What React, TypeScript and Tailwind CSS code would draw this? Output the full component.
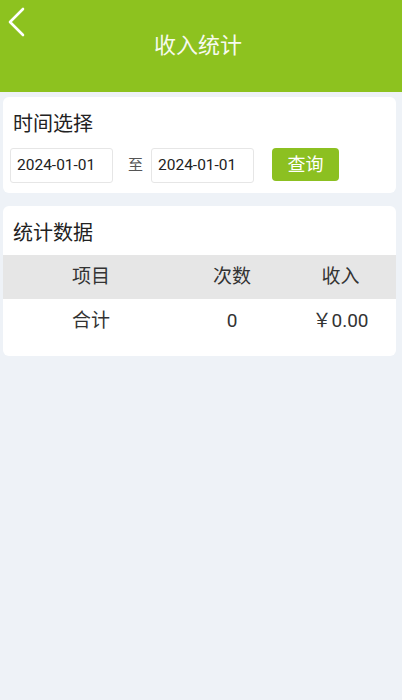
import React from "react";

const font = { fontFamily: "Roboto, 'Noto Sans CJK SC', sans-serif" };

export default function App() {
  return (
    <div className="min-h-[700px] w-[402px] bg-[#eef2f7]" style={font}>
      <div className="relative h-[92px] bg-[#8dc21f] flex items-center justify-center">
        <svg className="absolute left-[6px] top-[7px]" width="20" height="30" viewBox="0 0 20 30">
          <path d="M17 2 L4 15 L17 28" fill="none" stroke="#fff" strokeWidth="2.6" strokeLinecap="round" strokeLinejoin="round" />
        </svg>
        <div className="text-[#f7faef] text-[22px] leading-none ml-[-6px]">收入统计</div>
      </div>

      <div className="ml-[3px] w-[393px] mt-[5px] bg-white rounded-[6px] pt-[15px] pb-[10px] pl-[7px]">
        <div className="pl-[3px] text-[20px] leading-[24px] text-[#222]">时间选择</div>
        <div className="mt-[12px] flex items-center">
          <div className="w-[103px] h-[35px] border border-[#e6e6e6] rounded-[3px] flex items-center pl-[6px] text-[15.5px] text-[#222]">2024-01-01</div>
          <div className="ml-[15px] w-[14px] text-[15px] text-[#555] leading-none">至</div>
          <div className="ml-[9px] w-[103px] h-[35px] border border-[#e6e6e6] rounded-[3px] flex items-center pl-[6px] text-[15.5px] text-[#222]">2024-01-01</div>
          <div className="ml-[18px] w-[67px] h-[33px] -mt-[2px] bg-[#8cc021] rounded-[4px] flex items-center justify-center text-white text-[18px]">查询</div>
        </div>
      </div>

      <div className="ml-[3px] w-[393px] mt-[13px] bg-white rounded-[6px] pt-[15px] pb-[12px]">
        <div className="pl-[10px] text-[20px] leading-[24px] text-[#222]">统计数据</div>
        <div className="mt-[10px] h-[44px] bg-[#e6e6e6] grid grid-cols-[176px_106px_111px] items-center text-[19px] text-[#333]">
          <div className="text-center">项目</div>
          <div className="text-center">次数</div>
          <div className="text-center">收入</div>
        </div>
        <div className="h-[45px] grid grid-cols-[176px_106px_111px] items-center text-[19px] text-[#333]">
          <div className="text-center">合计</div>
          <div className="text-center">0</div>
          <div className="text-center">￥0.00</div>
        </div>
      </div>
    </div>
  );
}
